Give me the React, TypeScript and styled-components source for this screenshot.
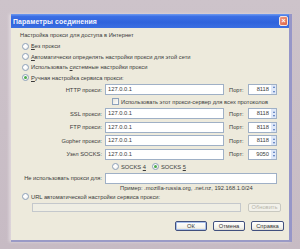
import React from 'react';
import styled, { createGlobalStyle } from 'styled-components';

const Global = createGlobalStyle`
  html, body { margin: 0; padding: 0; }
  body {
    width: 300px; height: 249px; overflow: hidden;
    background: #c9bec6;
    font-family: "Liberation Sans", Arial, sans-serif;
  }
`;

const Page = styled.div`
  width: 300px; height: 249px; box-sizing: border-box;
  padding: 14px 0 0 11px;
  background: linear-gradient(180deg, #cdc3ca 0%, #c7bbc4 100%);
`;

const Window = styled.div`
  width: 281px; height: 228px; box-sizing: border-box;
  display: flex; flex-direction: column;
  background: #edeadc;
  border-right: 3px solid #9696c8;
  border-bottom: 2px solid #9a9ac6;
  box-shadow: -2px 0 3px rgba(230, 222, 226, 0.8);
`;

const TitleBar = styled.div`
  height: 14px; flex: none;
  display: flex; align-items: center; justify-content: space-between;
  padding: 0 1px 0 2px;
  background: linear-gradient(180deg, #6f9af0 0%, #3a6ee4 18%, #2f63dc 60%, #3b6fe2 100%);
`;

const Title = styled.span`
  color: #f4f6ff; font-weight: bold; font-size: 6.9px; letter-spacing: 0.1px;
`;

const CloseBtn = styled.span`
  width: 9px; height: 10px; box-sizing: border-box;
  border: 1px solid #f4e6e0; border-radius: 2px;
  background: linear-gradient(135deg, #f09a80, #dc6448);
  color: #fff; font-size: 7px; line-height: 8px; text-align: center; font-weight: bold;
`;

const Body = styled.div`
  flex: 1; display: flex; flex-direction: column;
  padding: 3px 0 0 9px;
  font-size: 5.75px; color: #3a3a3a;
`;

const Caption = styled.div`
  height: 8px; line-height: 8px; margin-bottom: 2px; white-space: nowrap;
`;

const RadioRow = styled.label<{ $h?: number; $indent?: number }>`
  display: flex; align-items: center; gap: 2px;
  height: ${p => p.$h ?? 10.5}px;
  padding-left: ${p => p.$indent ?? 2}px;
  white-space: nowrap;
`;

const Radio = styled.span<{ $on?: boolean }>`
  width: 7px; height: 7px; box-sizing: border-box; flex: none;
  border: 1px solid #8ea2bc; border-radius: 50%;
  background: radial-gradient(circle at 40% 40%, #ffffff 30%, #e4e2da 100%);
  display: flex; align-items: center; justify-content: center;
  &::after {
    content: ''; width: 3px; height: 3px; border-radius: 50%;
    background: ${p => (p.$on ? '#4aa84a' : 'transparent')};
  }
`;

const FieldRow = styled.div<{ $h: number }>`
  display: grid;
  grid-template-columns: 73px 119px 24px 29px;
  align-items: center;
  height: ${p => p.$h}px;
  margin-left: 12px;
`;

const Label = styled.span`
  display: flex; justify-content: flex-end;
  padding-right: 3px; white-space: nowrap; min-width: 0;
`;

const PortLabel = styled.span`
  padding-left: 5px; white-space: nowrap;
`;

const Input = styled.div<{ $w?: number; $h?: number; $disabled?: boolean }>`
  height: ${p => p.$h ?? 11}px; box-sizing: border-box;
  ${p => (p.$w ? `width: ${p.$w}px;` : '')}
  border: 1px solid ${p => (p.$disabled ? '#c4c8cc' : '#9fb0c6')};
  background: ${p => (p.$disabled ? '#efeee4' : '#ffffff')};
  padding-left: 2px; line-height: 9px; white-space: nowrap;
`;

const Spin = styled.div`
  height: 11px; box-sizing: border-box;
  border: 1px solid #9fb0c6; background: #fff;
  display: flex; align-items: center; justify-content: flex-end;
  line-height: 9px;
`;

const SpinValue = styled.span`
  padding-right: 2px;
`;

const SpinArrows = styled.div`
  width: 5px; height: 9px; display: flex; flex-direction: column;
  justify-content: space-around; align-items: center;
  background: #dfe8f8;
`;

const Arrow = styled.span<{ $up?: boolean }>`
  width: 0; height: 0;
  border-left: 1.5px solid transparent; border-right: 1.5px solid transparent;
  ${p => (p.$up ? 'border-bottom: 2px solid #4a6fb8;' : 'border-top: 2px solid #4a6fb8;')}
`;

const CheckRow = styled.label`
  display: flex; align-items: center; gap: 2px;
  height: 11.3px; margin-left: 92px;
  white-space: nowrap;
`;

const Check = styled.span`
  width: 7px; height: 7px; box-sizing: border-box; flex: none;
  border: 1px solid #8ea2bc; background: linear-gradient(135deg, #e6e4dc, #ffffff);
`;

const SocksRow = styled.div`
  display: flex; align-items: center; gap: 6px;
  height: 12px; margin-left: 92px;
`;

const Hint = styled.div`
  height: 9px; line-height: 9px; margin-left: 100px; white-space: nowrap;
`;

const UrlRow = styled.div`
  display: flex; align-items: center; gap: 7px;
  margin: 2px 0 0 12px; height: 9px;
`;

const Btn = styled.div<{ $w: number; $disabled?: boolean; $default?: boolean }>`
  width: ${p => p.$w}px; height: ${p => (p.$disabled ? 9 : 10)}px; box-sizing: border-box;
  border: 1px solid ${p => (p.$disabled ? '#c8c8c0' : '#41507e')};
  border-radius: 2px;
  background: ${p => (p.$disabled ? '#f2f1ea' : 'linear-gradient(180deg, #ffffff 0%, #f3f2ec 70%, #dcdad0 100%)')};
  color: ${p => (p.$disabled ? '#b8b6aa' : '#333')};
  box-shadow: ${p => (p.$default ? 'inset 0 0 0 1px #a8c0ec' : 'none')};
  display: flex; align-items: center; justify-content: center;
  white-space: nowrap;
`;

const Footer = styled.div`
  display: flex; justify-content: flex-end; gap: 6px;
  margin-top: 9px; padding-right: 5px;
`;

const fields = [
  { label: 'SSL прокси:', port: '8118' },
  { label: 'FTP прокси:', port: '8118' },
  { label: 'Gopher прокси:', port: '8118' },
  { label: 'Узел SOCKS:', port: '9050' },
];

const PortBox = ({ value }: { value: string }) => (
  <Spin>
    <SpinValue>{value}</SpinValue>
    <SpinArrows>
      <Arrow $up />
      <Arrow />
    </SpinArrows>
  </Spin>
);

export default function App() {
  return (
    <>
      <Global />
      <Page>
        <Window>
          <TitleBar>
            <Title>Параметры соединения</Title>
            <CloseBtn>×</CloseBtn>
          </TitleBar>
          <Body>
            <Caption>Настройка прокси для доступа в Интернет</Caption>
            <RadioRow><Radio /><span><u>Б</u>ез прокси</span></RadioRow>
            <RadioRow><Radio /><span><u>А</u>втоматически определять настройки прокси для этой сети</span></RadioRow>
            <RadioRow><Radio /><span>Использовать <u>с</u>истемные настройки прокси</span></RadioRow>
            <RadioRow><Radio $on /><span><u>Р</u>учная настройка сервиса прокси:</span></RadioRow>
            <FieldRow $h={13}>
              <Label>HTTP прокси:</Label>
              <Input>127.0.0.1</Input>
              <PortLabel>Порт:</PortLabel>
              <PortBox value="8118" />
            </FieldRow>
            <CheckRow>
              <Check />
              <span>Использовать этот прокси-сервер для всех протоколов</span>
            </CheckRow>
            {fields.map(f => (
              <FieldRow $h={13.4} key={f.label}>
                <Label>{f.label}</Label>
                <Input>127.0.0.1</Input>
                <PortLabel>Порт:</PortLabel>
                <PortBox value={f.port} />
              </FieldRow>
            ))}
            <SocksRow>
              <RadioRow $h={12} $indent={0}><Radio /><span>SOCKS <u>4</u></span></RadioRow>
              <RadioRow $h={12} $indent={0}><Radio $on /><span>SOCKS <u>5</u></span></RadioRow>
            </SocksRow>
            <FieldRow $h={11}>
              <Label>Не использовать прокси для:</Label>
              <Input $w={172} />
            </FieldRow>
            <Hint>Пример: .mozilla-russia.org, .net.nz, 192.168.1.0/24</Hint>
            <RadioRow $h={8}><Radio /><span>URL автоматической настройки сервиса прокси:</span></RadioRow>
            <UrlRow>
              <Input $w={209} $h={9} $disabled />
              <Btn $w={33} $disabled>Обновить</Btn>
            </UrlRow>
            <Footer>
              <Btn $w={32} $default>ОК</Btn>
              <Btn $w={32}>Отмена</Btn>
              <Btn $w={33}>Справка</Btn>
            </Footer>
          </Body>
        </Window>
      </Page>
    </>
  );
}
